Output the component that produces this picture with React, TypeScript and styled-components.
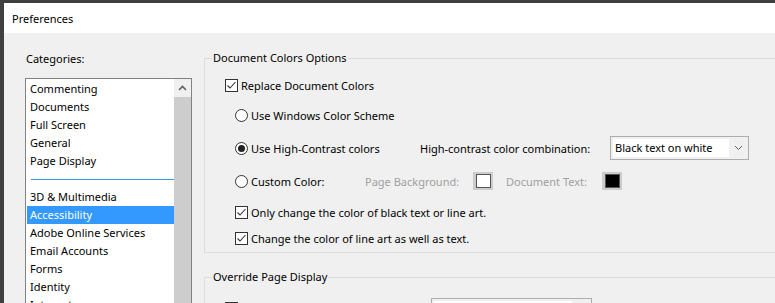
import React from 'react';
import styled, { createGlobalStyle } from 'styled-components';

const Global = createGlobalStyle`
  html, body { margin: 0; padding: 0; background: #404040; overflow: hidden; }
  body { font-family: "Noto Sans", "Segoe UI", sans-serif; font-size: 11px; color: #000; }
  * { box-sizing: border-box; }
`;

const Desktop = styled.div`
  width: 775px;
  height: 303px;
  padding: 3px 0 0 4px;
  background: #404040;
  overflow: hidden;
`;

const Window = styled.div`
  width: 900px;
  height: 420px;
  background: #f0f0f0;
  display: flex;
  flex-direction: column;
`;

const TitleBar = styled.div`
  height: 30px;
  flex: none;
  background: #fff;
  display: flex;
  align-items: center;
  padding-left: 8px;
  font-size: 11px;
`;

const Body = styled.div`
  display: flex;
  padding-left: 21px;
  gap: 12px;
`;

const LeftCol = styled.div`
  width: 167px;
  flex: none;
  display: flex;
  flex-direction: column;
  padding-top: 18px;
`;

const Caption = styled.div`
  height: 16px;
  line-height: 16px;
  padding-left: 1px;
  margin-bottom: 11px;
`;

const ListBox = styled.div`
  height: 260px;
  border: 1px solid #828282;
  background: #fff;
  display: flex;
`;

const Items = styled.div`
  flex: 1;
  display: flex;
  flex-direction: column;
  padding-top: 1px;
`;

const Item = styled.div<{ $sel?: boolean }>`
  height: 18px;
  line-height: 18px;
  margin-left: 1px;
  padding-left: 3px;
  white-space: nowrap;
  background: ${(p) => (p.$sel ? '#3399ff' : 'transparent')};
  color: ${(p) => (p.$sel ? '#fff' : '#000')};
`;

const Separator = styled.div`
  height: 18px;
  padding-top: 9px;
  padding-left: 5px;
  &::after {
    content: '';
    display: block;
    height: 1px;
    background: #3c96e6;
  }
`;

const ScrollBar = styled.div`
  width: 17px;
  flex: none;
  background: #f0f0f0;
  display: flex;
  flex-direction: column;
`;

const ScrollButton = styled.div`
  height: 18px;
  display: flex;
  align-items: center;
  justify-content: center;
`;

const Thumb = styled.div`
  flex: 1;
  background: #cdcdcd;
`;

const RightCol = styled.div`
  width: 620px;
  flex: none;
  padding-top: 17px;
  display: flex;
  flex-direction: column;
`;

const Group = styled.fieldset<{ $mt?: number }>`
  margin: ${(p) => p.$mt ?? 0}px 0 0 0;
  border: 1px solid #dcdcdc;
  padding: 5px 0 3px 7px;
  min-width: 0;
`;

const Legend = styled.legend`
  margin: 0;
  padding: 0 1px;
  line-height: 16px;
  height: 16px;
`;

const Row = styled.div<{ $h: number; $indent?: number }>`
  height: ${(p) => p.$h}px;
  display: flex;
  align-items: center;
  padding-left: ${(p) => 13 + (p.$indent ?? 0)}px;
  white-space: nowrap;
`;

const TopRow = styled(Row)`
  align-items: flex-start;
  padding-top: 8px;
`;

const Option = styled.div<{ $w?: number }>`
  display: flex;
  align-items: center;
  gap: 3px;
  ${(p) => (p.$w ? `width: ${p.$w}px; flex: none;` : '')}
`;

const Box = styled.span`
  width: 13px;
  height: 13px;
  flex: none;
  border: 1px solid #333;
  background: #fff;
  display: flex;
  align-items: center;
  justify-content: center;
`;

const BoxSlot = styled.div`
  padding-top: 4px;
`;

const Radio = styled.span<{ $on?: boolean }>`
  width: 13px;
  height: 13px;
  flex: none;
  border: 1px solid #333;
  border-radius: 50%;
  background: #fff;
  display: flex;
  align-items: center;
  justify-content: center;
  &::after {
    content: '';
    width: 7px;
    height: 7px;
    border-radius: 50%;
    background: ${(p) => (p.$on ? '#222' : 'transparent')};
  }
`;

const FieldLabel = styled.span<{ $w: number; $dim?: boolean }>`
  width: ${(p) => p.$w}px;
  flex: none;
  color: ${(p) => (p.$dim ? '#a0a0a0' : '#000')};
`;

const Combo = styled.div<{ $w: number }>`
  width: ${(p) => p.$w}px;
  height: 24px;
  flex: none;
  border: 1px solid #adadad;
  background: #f0f0f0;
  padding: 2px 0 2px 2px;
  display: flex;
`;

const ComboField = styled.div`
  flex: 1;
  background: #fff;
  padding-left: 2px;
  line-height: 18px;
`;

const ComboArrow = styled.div`
  width: 19px;
  flex: none;
  display: flex;
  align-items: center;
  justify-content: center;
`;

const Swatch = styled.span<{ $color: string; $mr?: number }>`
  width: 20px;
  height: 18px;
  flex: none;
  background: #cccccc;
  display: flex;
  align-items: center;
  justify-content: center;
  margin-right: ${(p) => p.$mr ?? 0}px;
  &::after {
    content: '';
    width: 13px;
    height: 12px;
    border: 1px solid #555;
    background: ${(p) => p.$color};
  }
`;

const Check = () => (
  <Box>
    <svg width="11" height="11" viewBox="0 0 11 11">
      <polyline points="1.5,5.5 4,8 9.5,2" fill="none" stroke="#333" strokeWidth="1.1" />
    </svg>
  </Box>
);

const categories1 = ['Commenting', 'Documents', 'Full Screen', 'General', 'Page Display'];
const categories2 = ['3D & Multimedia', 'Accessibility', 'Adobe Online Services', 'Email Accounts', 'Forms', 'Identity', 'Internet', 'JavaScript'];

export default function App() {
  return (
    <>
      <Global />
      <Desktop>
        <Window>
          <TitleBar>Preferences</TitleBar>
          <Body>
            <LeftCol>
              <Caption>Categories:</Caption>
              <ListBox>
                <Items>
                  {categories1.map((c) => (
                    <Item key={c}>{c}</Item>
                  ))}
                  <Separator />
                  {categories2.map((c) => (
                    <Item key={c} $sel={c === 'Accessibility'}>
                      {c}
                    </Item>
                  ))}
                </Items>
                <ScrollBar>
                  <ScrollButton>
                    <svg width="9" height="6" viewBox="0 0 9 6">
                      <polyline points="1,5 4.5,1.5 8,5" fill="none" stroke="#606060" strokeWidth="1.6" />
                    </svg>
                  </ScrollButton>
                  <Thumb />
                </ScrollBar>
              </ListBox>
            </LeftCol>
            <RightCol>
              <Group>
                <Legend>Document Colors Options</Legend>
                <Row $h={28}>
                  <Option>
                    <Check />
                    Replace Document Colors
                  </Option>
                </Row>
                <Row $h={32} $indent={10}>
                  <Option>
                    <Radio />
                    Use Windows Color Scheme
                  </Option>
                </Row>
                <Row $h={34} $indent={10}>
                  <Option $w={185}>
                    <Radio $on />
                    Use High-Contrast colors
                  </Option>
                  <FieldLabel $w={190}>High-contrast color combination:</FieldLabel>
                  <Combo $w={139}>
                    <ComboField>Black text on white</ComboField>
                    <ComboArrow>
                      <svg width="9" height="6" viewBox="0 0 9 6">
                        <polyline points="1,1 4.5,4.5 8,1" fill="none" stroke="#606060" strokeWidth="1" />
                      </svg>
                    </ComboArrow>
                  </Combo>
                </Row>
                <Row $h={32} $indent={10}>
                  <Option $w={130}>
                    <Radio />
                    Custom Color:
                  </Option>
                  <FieldLabel $w={108} $dim>
                    Page Background:
                  </FieldLabel>
                  <Swatch $color="#fff" $mr={13} />
                  <FieldLabel $w={96} $dim>
                    Document Text:
                  </FieldLabel>
                  <Swatch $color="#000" />
                </Row>
                <Row $h={30} $indent={10}>
                  <Option>
                    <Check />
                    Only change the color of black text or line art.
                  </Option>
                </Row>
                <Row $h={22} $indent={10}>
                  <Option>
                    <Check />
                    Change the color of line art as well as text.
                  </Option>
                </Row>
              </Group>
              <Group $mt={16}>
                <Legend>Override Page Display</Legend>
                <TopRow $h={35}>
                  <Option $w={206}>
                    <BoxSlot>
                      <Box />
                    </BoxSlot>
                  </Option>
                  <Combo $w={161}>
                    <ComboField />
                    <ComboArrow />
                  </Combo>
                </TopRow>
              </Group>
            </RightCol>
          </Body>
        </Window>
      </Desktop>
    </>
  );
}
